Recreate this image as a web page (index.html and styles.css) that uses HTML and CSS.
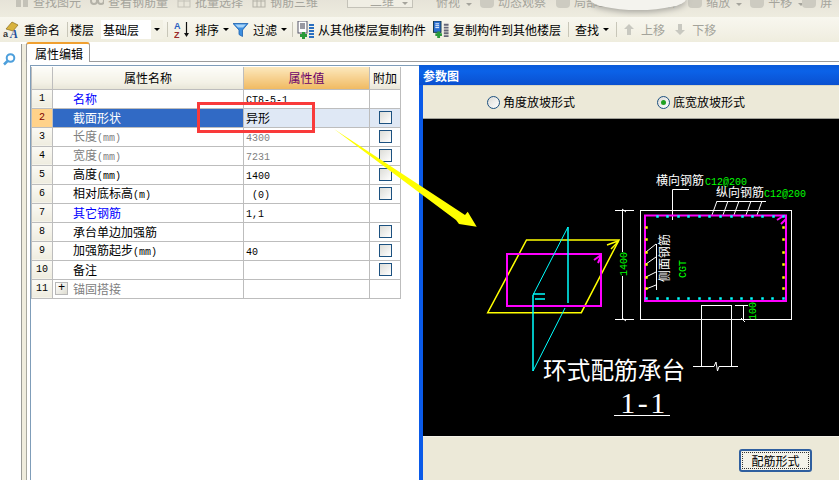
FILE: index.html
```html
<!DOCTYPE html>
<html lang="zh">
<head>
<meta charset="utf-8">
<title>属性编辑</title>
<link rel="stylesheet" href="styles.css">
</head>
<body>
<div class="app">
  <div class="bar-top">
    <div class="bar-top-row">
      <span class="ti i1"><svg class="dim-ico" viewBox="0 0 14 14"><rect x="1" y="0" width="5" height="13" fill="#c4c2b8"/><rect x="8" y="0" width="5" height="13" fill="#c4c2b8"/></svg>查找图元</span>
      <span class="ti i2"><svg class="dim-ico" viewBox="0 0 14 14"><circle cx="4" cy="7" r="3" fill="none" stroke="#b4b2a8" stroke-width="2"/><circle cx="11" cy="7" r="3" fill="none" stroke="#b4b2a8" stroke-width="2"/></svg>查看钢筋量</span>
      <span class="ti i3"><svg class="dim-ico" viewBox="0 0 14 14"><rect x="1" y="0" width="12" height="13" fill="none" stroke="#c4c2b8"/><path d="M1 7h12M7 0v13" stroke="#c4c2b8"/></svg>批量选择</span>
      <span class="ti i4"><svg class="dim-ico" viewBox="0 0 14 14"><rect x="1" y="0" width="12" height="13" fill="none" stroke="#b4b2a8"/><path d="M1 7h12M5 0v13M9 0v13" stroke="#b4b2a8"/></svg>钢筋三维</span>
      <span class="ti-box">二维<i class="ti-caret"></i></span>
      <span class="ti i6">俯视<i class="ti-caret"></i></span>
      <span class="ti ti-ic i7">动态观察</span>
      <span class="ti ti-ic i8">局部三维</span>
      <span class="ti i9">全屏</span>
      <span class="ti ti-ic i10">缩放<i class="ti-caret"></i></span>
      <span class="ti ti-ic i11">平移<i class="ti-caret"></i></span>
      <span class="ti ti-ic i12">屏</span>
    </div>
    <div class="bar-blob"></div>
  </div>

  <div class="bar-main">
    <span class="tool t-rename">
      <svg class="ico17" viewBox="0 0 17 17"><path d="M3 8 9 1l6 3-5 6z" fill="#d8b23c" stroke="#8a6d1c" stroke-width=".7"/><text x="0" y="16" class="ico-a1">a</text><text x="7" y="16.500" class="ico-a2">A</text></svg>
      重命名
    </span>
    <i class="sep sep-a"></i>
    <span class="tool">楼层</span>
    <span class="select"><span class="select-text">基础层</span><span class="select-btn"><i class="caret"></i></span></span>
    <i class="sep sep-b"></i>
    <span class="tool t-sort">
      <svg class="ico17" viewBox="0 0 17 17"><text x="0" y="8" class="ico-az1">A</text><text x="0" y="16.500" class="ico-az2">Z</text><path d="M12.500 1v13" stroke="#111" stroke-width="1.200"/><path d="M10 12h5l-2.500 4z" fill="#111"/></svg>
      排序<i class="caret"></i>
    </span>
    <span class="tool t-filter">
      <svg class="ico16" viewBox="0 0 16 16"><path d="M0 2h15L9.500 8.500V15L6 13V8.500z" fill="#3d8fe0" stroke="#1b5fae" stroke-width=".8"/><path d="M2 3h11l-3 3H5z" fill="#a8d4f7"/></svg>
      过滤<i class="caret"></i>
    </span>
    <i class="sep sep-c"></i>
    <span class="tool t-copy1">
      <svg class="ico18" viewBox="0 0 18 18"><rect x="1" y="0" width="9" height="12" fill="#fff" stroke="#556"/><path d="M3 3h5M3 5h5M3 7h5" stroke="#334"/><path d="M5 11h3v2h2v3H8v2H5v-2H3v-3h2z" fill="#2a9a3a"/><path d="M12 4h5M12 7h5M12 10h5M12 13h5M12 16h5" stroke="#2a6fc0" stroke-width="2"/></svg>
      从其他楼层复制构件
    </span>
    <span class="tool t-copy2">
      <svg class="ico16" viewBox="0 0 16 18"><rect x="0" y="0" width="8" height="12" fill="#2a6fd0" stroke="#134"/><path d="M2 3h4M2 5h4M2 7h4" stroke="#fff"/><path d="M4 11h3v2h2v3H7v2H4v-2H2v-3h2z" fill="#2a9a3a"/><path d="M11 4h5M11 7h5M11 10h5M11 13h5M11 16h5" stroke="#667" stroke-width="2"/></svg>
      复制构件到其他楼层
    </span>
    <i class="sep sep-d"></i>
    <span class="tool">查找<i class="caret"></i></span>
    <i class="sep sep-e"></i>
    <span class="tool off t-up">
      <svg class="ico10" viewBox="0 0 10 11"><path d="M5 0l5 5H7v6H3V5H0z" fill="#c8c8c0"/></svg>
      上移
    </span>
    <span class="tool off t-down">
      <svg class="ico10" viewBox="0 0 10 11"><path d="M5 11l5-5H7V0H3v6H0z" fill="#c8c8c0"/></svg>
      下移
    </span>
  </div>

  <div class="work">
    <div class="side">
      <svg class="side-ico" viewBox="0 0 13 13"><circle cx="7.500" cy="5" r="3.800" fill="#fff" stroke="#4d9fdc" stroke-width="2"/><path d="M4.500 8 1 11.500" stroke="#4d9fdc" stroke-width="2.500"/></svg>
    </div>
    <div class="split"></div>
    <div class="panel">
      <div class="tabs"><span class="tab">属性编辑</span></div>
      <div class="frame">
        <table class="grid">
          <colgroup><col class="c-no"><col class="c-name"><col class="c-val"><col class="c-add"></colgroup>
          <tr class="head"><th class="no"></th><th>属性名称</th><th class="hv">属性值</th><th>附加</th></tr>
          <tr><td class="no">1</td><td class="nm link">名称</td><td class="v"><span class="m">CT8-5-1</span></td><td></td></tr>
          <tr class="sel"><td class="no">2</td><td class="nm">截面形状</td><td class="v">异形</td><td class="ck"><i class="box"></i></td></tr>
          <tr class="gray"><td class="no">3</td><td class="nm">长度<span class="m">(mm)</span></td><td class="v"><span class="m">4300</span></td><td class="ck"><i class="box"></i></td></tr>
          <tr class="gray"><td class="no">4</td><td class="nm">宽度<span class="m">(mm)</span></td><td class="v"><span class="m">7231</span></td><td class="ck"><i class="box"></i></td></tr>
          <tr><td class="no">5</td><td class="nm">高度<span class="m">(mm)</span></td><td class="v"><span class="m">1400</span></td><td class="ck"><i class="box"></i></td></tr>
          <tr><td class="no">6</td><td class="nm">相对底标高<span class="m">(m)</span></td><td class="v"><span class="m"> (0)</span></td><td class="ck"><i class="box"></i></td></tr>
          <tr><td class="no">7</td><td class="nm link">其它钢筋</td><td class="v"><span class="m">1,1</span></td><td></td></tr>
          <tr><td class="no">8</td><td class="nm">承台单边加强筋</td><td class="v"></td><td class="ck"><i class="box"></i></td></tr>
          <tr><td class="no">9</td><td class="nm">加强筋起步<span class="m">(mm)</span></td><td class="v"><span class="m">40</span></td><td class="ck"><i class="box"></i></td></tr>
          <tr><td class="no">10</td><td class="nm">备注</td><td class="v"></td><td class="ck"><i class="box"></i></td></tr>
          <tr class="gray"><td class="no">11</td><td class="exp"><span class="exp-in"><i class="plus">+</i>锚固搭接</span></td><td class="v"></td><td></td></tr>
        </table>
      </div>
    </div>
  </div>

  <section class="dialog">
    <div class="dlg-title">参数图</div>
    <div class="dlg-body">
      <div class="radios">
        <label class="radio r-a"><i class="dot"></i>角度放坡形式</label>
        <label class="radio r-b"><i class="dot on"></i>底宽放坡形式</label>
      </div>
      <svg class="cad" viewBox="423 119 416 317">
        <g fill="none" stroke="#ffff00" stroke-width="1.500">
          <path d="M526.500 240H619L581.300 312.700H487.700Z"/>
          <path d="M607 245 618 241M611 249 618 242"/>
        </g>
        <g fill="none" stroke="#ff00ff" stroke-width="2">
          <rect x="507" y="254" width="94" height="52"/>
          <path d="M594 260 601 255M598 263 601 256"/>
        </g>
        <g fill="none" stroke="#00ffff">
          <path d="M568 227 533 295M565 308 533 371" stroke-width="1"/>
          <path d="M568 227V303" stroke-width="1.500"/>
          <path d="M533 295V371M533 294H545M535 299H545" stroke-width="1.500"/>
        </g>
        <g fill="none" stroke="#fff" stroke-width="1">
          <path d="M615 210.500H634M615 319.500H634M622.500 210V252M622.500 276V319M622 209 626 212M622 318 626 321"/>
          <rect x="640.500" y="210.500" width="151" height="109"/>
          <path d="M701.500 305V366M731.500 305V366M701 305.500H732M693 366.500H714L716 362 717.500 371 719 366.500H738"/>
          <path d="M735 305.500H748M743.500 305V319M741 318 745 322M689 189.500H672.500V220"/>
          <path d="M717 201.500H766M717 201 712 215M728 201 723 215M739 201 734 215M751 201 746 215M762 201 757 215"/>
          <path d="M656.500 244V290M656 244 646 252M656 257 646 264M656 272 646 277M656 285 646 289"/>
          <path d="M614 415.500H670"/>
        </g>
        <path d="M645 215.500H786V301H645ZM777 220 785 215M781 224 786 219" fill="none" stroke="#ff00ff" stroke-width="2"/>
        <g fill="#00ffff">
          <path d="M657 216h1v1h-1zM667 216h1v1h-1zM678 216h1v1h-1zM688 216h1v1h-1zM699 216h1v1h-1zM709 216h1v1h-1zM720 216h1v1h-1zM731 216h1v1h-1zM742 216h1v1h-1zM752 216h1v1h-1zM762 216h1v1h-1zM773 216h1v1h-1zM783 216h1v1h-1z" stroke="#00ffff" stroke-width="1.500"/>
          <path d="M646 298h1v1h-1zM657 298h1v1h-1zM667 298h1v1h-1zM678 298h1v1h-1zM688 298h1v1h-1zM699 298h1v1h-1zM709 298h1v1h-1zM720 298h1v1h-1zM731 298h1v1h-1zM741 298h1v1h-1zM751 298h1v1h-1zM762 298h1v1h-1zM772 298h1v1h-1zM783 298h1v1h-1z" stroke="#00ffff" stroke-width="1.500"/>
        </g>
        <path d="M646 227h1v1h-1zM646 239h1v1h-1zM646 252h1v1h-1zM646 264h1v1h-1zM646 277h1v1h-1zM646 288h1v1h-1zM783 227h1v1h-1zM783 239h1v1h-1zM783 252h1v1h-1zM783 264h1v1h-1zM783 277h1v1h-1zM783 288h1v1h-1z" fill="#ffff00" stroke="#ffff00" stroke-width="1.500"/>
        <text class="cad-w" x="656" y="185">横向钢筋</text>
        <text class="cad-g" x="705" y="185">C12@200</text>
        <text class="cad-w" x="716" y="197">纵向钢筋</text>
        <text class="cad-g" x="764" y="197">C12@200</text>
        <text class="cad-w" transform="translate(669 282) rotate(-90)">侧面钢筋</text>
        <text class="cad-g" transform="translate(686 278) rotate(-90)">CGT</text>
        <text class="cad-g" transform="translate(627 276) rotate(-90)">1400</text>
        <text class="cad-g" transform="translate(756 320) rotate(-90)">100</text>
        <text class="cad-title" x="543" y="379">环式配筋承台</text>
        <text class="cad-sec" x="644" y="413">1-1</text>
      </svg>
      <div class="dlg-foot"><button class="btn">配筋形式</button></div>
    </div>
  </section>

  <svg class="notes" viewBox="0 0 839 480">
    <rect x="198.500" y="103.500" width="115" height="28" fill="none" stroke="#f93a3a" stroke-width="3"/>
    <path d="M334 129 465 215 467.700 211.700 476.700 226.700 459 224 456 220Z" fill="#ffff00"/>
  </svg>
</div>
</body>
</html>
```
FILE: styles.css
```css
* { box-sizing: border-box; }
html, body { margin: 0; height: 100%; }
body {
  width: 839px;
  height: 480px;
  overflow: hidden;
  background: #fff;
  font: 12px/1 "Noto Sans CJK SC", "Liberation Sans", sans-serif;
  color: #000;
}
.app { position: relative; width: 839px; height: 480px; display: flex; flex-direction: column; }

/* dim top toolbar, cut off by the screenshot */
.bar-top { position: relative; height: 17px; flex: none; overflow: hidden; background: linear-gradient(#e6e3d8, #eeecdf); }
.bar-top-row { display: flex; align-items: flex-end; height: 8px; color: #a5a49c; font-size: 12px; line-height: 12px; }
.ti { display: flex; align-items: flex-end; gap: 4px; flex: none; white-space: nowrap; }
.ti-ic::before { content: ""; flex: none; width: 14px; height: 11px; margin-left: -18px; background: #cdcbc1; border-radius: 4px; }
.dim-ico { width: 14px; height: 14px; flex: none; }
.i1 { margin-left: 15px; }
.i2, .i3, .i4 { margin-left: 9px; }
.ti-box { flex: none; display: flex; align-items: flex-end; gap: 6px; width: 66px; height: 12px; margin-left: 29px; padding-left: 22px; border: 1px solid #c4c2b8; background: #f0eee4; }
.i6 { margin-left: 23px; }
.i7 { margin-left: 26px; }
.i8 { margin-left: 28px; }
.i9 { margin-left: 31px; }
.i10 { margin-left: 29px; }
.i11 { margin-left: 26px; }
.i12 { margin-left: 16px; }
.ti-caret { width: 0; height: 0; margin: 0 0 2px 2px; border: 3px solid transparent; border-top-color: #a5a49c; border-bottom: 0; }
.bar-blob { position: absolute; left: 590px; top: -12px; width: 96px; height: 22px; border-radius: 50%; background: #f4f3ee; box-shadow: 0 2px 6px #a5a49e; }

/* main toolbar */
.bar-main { height: 25px; flex: none; display: flex; align-items: center; padding: 0 0 0 3px; background: linear-gradient(#f8f7ef, #f2f0e4 70%, #efedde); white-space: nowrap; }
.tool { display: flex; align-items: center; gap: 4px; flex: none; }
.off { color: #a3a39a; }
.ico17 { width: 17px; height: 17px; flex: none; }
.ico16 { width: 16px; height: 17px; flex: none; }
.ico18 { width: 18px; height: 18px; flex: none; }
.ico10 { width: 10px; height: 11px; flex: none; }
.ico-a1 { font: bold 9px "Liberation Sans", sans-serif; fill: #333; }
.ico-a2 { font: italic bold 12px "Liberation Serif", serif; fill: #1f4f9a; }
.ico-az1 { font: bold 9px "Liberation Sans", sans-serif; fill: #2a5fc0; }
.ico-az2 { font: bold 9px "Liberation Sans", sans-serif; fill: #9a2a2a; }
.caret { display: inline-block; width: 0; height: 0; border: 3px solid transparent; border-top-color: #000; border-bottom: 0; }
.sep { flex: none; width: 1px; height: 15px; background: #c8c6b8; }
.sep-a { margin: 0 2px 0 7px; }
.sep-b { margin: 0 6px 0 4px; }
.sep-c { margin: 0 4px 0 5px; }
.sep-d { margin: 0 6px 0 7px; }
.sep-e { margin: 0 7px 0 7px; }
.select { flex: none; display: flex; align-items: center; width: 62px; height: 19px; margin-left: 7px; background: #fff; }
.select-text { flex: 1; padding-left: 2px; }
.select-btn { width: 12px; height: 100%; display: flex; align-items: center; justify-content: center; background: #f2f0e4; }
.t-filter { margin-left: 4px; }
.t-copy1 { gap: 3px; }
.t-copy2 { margin-left: 7px; }
.t-down { margin-left: 10px; }
.t-up, .t-down { gap: 7px; }

/* work area */
.work { flex: 1; display: flex; min-height: 0; }
.side { width: 21px; flex: none; padding: 11px 0 0 3px; background: #fff; }
.side-ico { display: block; width: 13px; height: 13px; }
.split { width: 6px; flex: none; margin-top: 2px; border-left: 1px solid #9a9a96; border-right: 1px solid #a8a89f; background: #efecdd; }
.panel { flex: 1; min-width: 0; display: flex; flex-direction: column; }
.tabs { height: 23px; flex: none; background-image: linear-gradient(#9c9c9c, #9c9c9c); background-repeat: no-repeat; background-size: 100% 1px; background-position: 0 19px; }
.tab { display: inline-block; width: 64px; height: 20px; margin-left: -1px; padding: 4px 0 0 8px; background: #fff; border: 1px solid #9c9c9c; border-top: 2px solid #f0a030; border-bottom: 0; border-radius: 3px 3px 0 0; position: relative; }
.frame { flex: 1; margin-left: 3px; padding: 1px; border-left: 1px solid #7f9db9; border-top: 1px solid #7f9db9; background: #fff; }

.grid { border-collapse: collapse; table-layout: fixed; width: 369px; margin: 0 0 0 -1px; }
.c-no { width: 21px; } .c-name { width: 191px; } .c-val { width: 126px; } .c-add { width: 31px; }
.grid th, .grid td { padding: 0; border: 1px solid #bdbdbd; font-weight: 400; height: 19px; overflow: hidden; white-space: pre; }
.grid .head th { height: 22px; text-align: center; background: linear-gradient(#fdfdf9, #f3f1e6 70%, #e8e6d8); border-top: 0; }
.grid .head .hv { background: linear-gradient(#fce8bd, #f0ba62); color: #6a006a; }
.grid .no { text-align: center; font: 10px "Liberation Mono", monospace; background: linear-gradient(#fbfaf5, #eeecdf); }
.nm { padding-left: 20px !important; }
.v { padding-left: 2px !important; }
.link { color: #0000ff; }
.gray td { color: #808080; }
.gray .no { color: #000; }
.m { font: 10px "Liberation Mono", monospace; }
.sel .nm { background: #316ac5; color: #fff; }
.sel .v { background: #dfe8f5; }
.sel td:last-child { background: #dfe8f5; }
.grid .sel .no { background: #ffd28a; color: #800000; }
.ck { text-align: center; vertical-align: middle; }
.box { display: block; width: 13px; height: 13px; margin: 0 auto; border: 1px solid #1c5180; background: linear-gradient(135deg, #dcdcd7, #fff); }
.exp { padding-left: 2px !important; }
.exp-in { display: flex; align-items: center; gap: 5px; }
.plus { flex: none; width: 13px; height: 13px; border: 1px solid #b8b8b8; background: linear-gradient(135deg, #fff, #dedcd0); color: #000; font: 12px/11px "Liberation Mono", monospace; text-align: center; }

/* floating dialog window */
.dialog { position: absolute; left: 419px; top: 65px; width: 420px; height: 415px; display: flex; flex-direction: column; background: #0a5ae8; padding-left: 4px; }
.dlg-title { height: 20px; flex: none; margin-left: -4px; padding: 5px 0 0 4px; background: linear-gradient(#0a5ad8, #0b62e8 30%, #0a50d0); color: #fff; font-weight: 700; }
.dlg-body { flex: 1; min-height: 0; display: flex; flex-direction: column; background: #ece9d8; border-top: 1px solid #d8d6c4; }
.radios { height: 33px; flex: none; display: flex; align-items: center; padding-left: 64px; border-bottom: 1px solid #a0a098; }
.radio { display: flex; align-items: center; gap: 3px; white-space: nowrap; }
.r-b { margin-left: 82px; }
.dot { position: relative; display: block; width: 13px; height: 13px; border: 1px solid #1c5180; border-radius: 50%; background: linear-gradient(135deg, #dcdcd7, #fff); }
.dot.on::after { content: ""; position: absolute; left: 3px; top: 3px; width: 5px; height: 5px; border-radius: 50%; background: #21a121; }
.cad { display: block; width: 416px; height: 317px; flex: none; background: #000; }
.cad-w { font: 12px "Noto Sans CJK SC", sans-serif; fill: #fff; }
.cad-g { font: 10px "Liberation Mono", monospace; fill: #00ff00; }
.cad-title { font: 23.700px "Noto Sans CJK SC", sans-serif; fill: #fff; }
.cad-sec { font: 30px "Liberation Serif", serif; fill: #fff; text-anchor: middle; letter-spacing: 2.500px; }
.dlg-foot { flex: 1; display: flex; justify-content: flex-end; align-items: flex-start; padding: 12px 27px 0 0; border-top: 1px solid #f4f2e8; }
.btn { width: 73px; height: 23px; padding: 0; font: inherit; color: #000; border: 2px solid #2f5f9f; border-radius: 3px; background: #f4f3ea; outline: 1px dotted #333; outline-offset: -4px; }

/* hand-drawn annotations over the screenshot */
.notes { position: absolute; left: 0; top: 0; width: 839px; height: 480px; pointer-events: none; }
```
